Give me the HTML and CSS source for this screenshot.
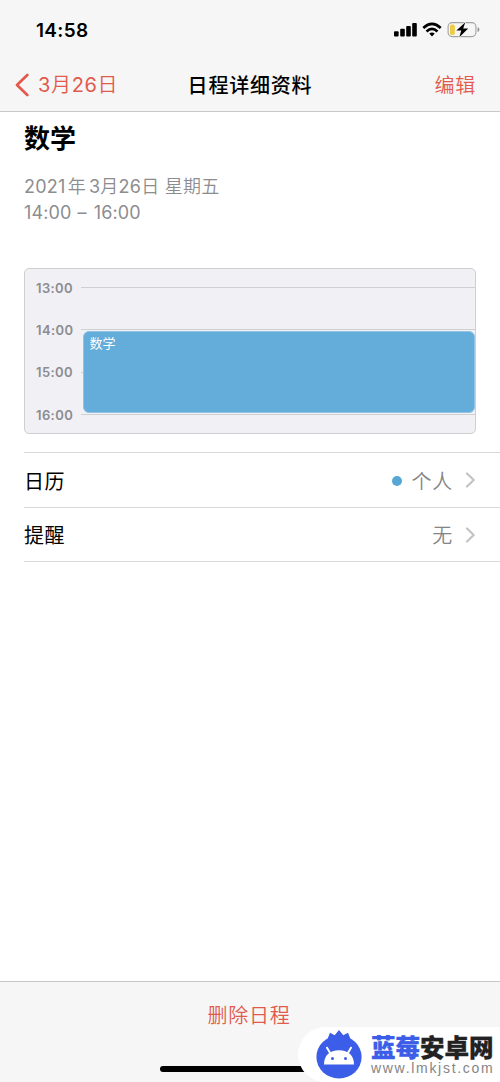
FILE: index.html
```html
<!DOCTYPE html>
<html lang="zh-CN">
<head>
<meta charset="utf-8">
<title>日程详细资料</title>
<link rel="stylesheet" href="styles.css">
</head>
<body>
<div class="screen">
  <header class="header">
    <div class="status">
      <span class="clock">14:58</span>
      <svg class="status-icons" width="88" height="20" viewBox="0 0 88 20">
        <rect x="2" y="11.2" width="4.6" height="5.3" rx="1"/>
        <rect x="8.2" y="8.8" width="4.6" height="7.7" rx="1"/>
        <rect x="14.2" y="6" width="4.6" height="10.5" rx="1"/>
        <rect x="20.2" y="3" width="4.6" height="13.5" rx="1"/>
        <g fill="none" stroke="#000" stroke-width="2.7">
          <path d="M31.3 7.9Q40 0 48.7 7.9"/>
          <path d="M34.5 11.4Q40 6.5 45.5 11.4"/>
        </g>
        <path d="M37.3 13.5Q40 11.4 42.7 13.5L40 16.4Z"/>
        <rect x="56.1" y="2.6" width="27.8" height="14" rx="4" fill="none" stroke="#a2a2a2" stroke-width="1.1"/>
        <path d="M85.6 7.3Q87.4 7.8 87.4 9.7T85.6 12.1Z" fill="#8e8e8e"/>
        <rect x="58" y="4.5" width="4.8" height="10.4" rx="1.7" fill="#efcc45"/>
        <path d="M73.3 2.3L64.4 10.5H69.3L67.3 17.2L76.2 8.5H71.2Z" stroke="#f6f6f6" stroke-width="1.4" paint-order="stroke"/>
      </svg>
    </div>
    <nav class="nav">
      <a class="back">
        <svg width="14" height="24" viewBox="0 0 14 24"><path d="M12.3 2L2 12L12.3 22" fill="none" stroke="currentColor" stroke-width="2.7" stroke-linecap="round" stroke-linejoin="round"/></svg>
        <span><span class="num">3</span>月<span class="num">26</span>日</span>
      </a>
      <h1 class="nav-title">日程详细资料</h1>
      <a class="edit">编辑</a>
    </nav>
  </header>
  <main class="main">
    <h2 class="event-title">数学</h2>
    <p class="event-date"><span class="num">2021</span><span class="year">年</span><span class="num">3</span>月<span class="num">26</span>日 星期五</p>
    <p class="event-time">14:00 <span class="dash">–</span> 16:00</p>
    <section class="timeline">
      <div class="hour"><span>13:00</span><i></i></div>
      <div class="hour"><span>14:00</span><i></i></div>
      <div class="hour"><span>15:00</span><i></i></div>
      <div class="hour"><span>16:00</span><i></i></div>
      <div class="event">数学</div>
    </section>
    <section class="rows">
      <div class="row">
        <span class="label">日历</span><span class="dot"></span><span class="value">个人</span>
        <svg class="chevron" width="11" height="16" viewBox="0 0 11 16"><path d="M2 1.5L8.7 8L2 14.5"/></svg>
      </div>
      <div class="row">
        <span class="label">提醒</span><span class="value">无</span>
        <svg class="chevron" width="11" height="16" viewBox="0 0 11 16"><path d="M2 1.5L8.7 8L2 14.5"/></svg>
      </div>
    </section>
  </main>
  <footer class="footer">
    <a class="delete">删除日程</a>
    <div class="home-bar"></div>
  </footer>
  <aside class="watermark">
    <svg class="logo" width="46" height="50" viewBox="0 0 46 50">
      <path d="M9.5 14L14 2.8L18.7 5.2L23 0L27.3 5.2L32 2.8L36.5 14Z" fill="#3b5de7"/>
      <ellipse cx="23" cy="27" rx="22.6" ry="21.5" fill="#3b5de7"/>
      <path d="M8 34.5C8 25.5 13.5 20.2 23 20.2S38 25.5 38 34.5Z" fill="#fff"/>
      <path d="M11 17.7L15 24.5M35 17.7L31 24.5" stroke="#fff" stroke-width="2" stroke-linecap="round"/>
      <circle cx="16.5" cy="28.4" r="1.5" fill="#3b5de7"/><circle cx="29.5" cy="28.4" r="1.5" fill="#3b5de7"/>
    </svg>
    <div class="brand">
      <div class="brand-name"><b>蓝莓</b>安卓网</div>
      <div class="brand-url">www.lmkjst.com</div>
    </div>
  </aside>
</div>
</body>
</html>
```
FILE: styles.css
```css
* { box-sizing: border-box; }
body, h1, h2, p { margin: 0; }
body {
  font-family: Inter, "Noto Sans CJK SC", sans-serif;
  background: #fff;
  color: #000;
}
.screen {
  position: relative;
  display: flex;
  flex-direction: column;
  height: 1082px;
  overflow: hidden;
}
.header {
  height: 112px;
  background: #f6f6f6;
  border-bottom: 1px solid #c8c8ca;
}
.status {
  display: flex;
  justify-content: space-between;
  align-items: center;
  height: 60px;
  padding: 0 20px 0 36px;
}
.clock { font-size: 19px; font-weight: 600; letter-spacing: 0.3px; }
.num { font-weight: 400; }
.nav {
  display: grid;
  grid-template-columns: 1fr auto 1fr;
  align-items: center;
  height: 50px;
  padding: 0 24px 0 15px;
  color: #e15a4c;
  font-size: 20px;
  font-weight: 350;
  line-height: 28px;
}
.back { display: flex; align-items: center; gap: 9px; letter-spacing: 0.65px; }
.nav-title {
  padding: 2px 0 0 9px;
  color: #000;
  font-size: 20px;
  font-weight: 500;
  letter-spacing: 0.8px;
}
.edit { justify-self: end; padding-top: 2px; letter-spacing: 0.8px; }
.main { flex: 1; padding: 7px 0 0 24px; }
.event-title { font-size: 26px; line-height: 40px; font-weight: 700; }
.event-date, .event-time {
  color: #8d8d8f;
  font-size: 18px;
  font-weight: 350;
  line-height: 26px;
  letter-spacing: 0.25px;
}
.event-date { margin-top: 15px; }
.event-time { font-weight: 400; letter-spacing: 0.1px; }
.dash { margin: 0 2px 0 1px; }
.year { margin: 0 3px 0 2px; }
.timeline {
  position: relative;
  height: 166px;
  margin: 42px 24px 0 0;
  padding: 0 0 0 11px;
  background: #f0f0f5;
  border: 1px solid #cfcfd2;
  border-radius: 5px;
}
.hour {
  display: flex;
  align-items: center;
  gap: 8px;
  height: 42.3px;
  color: #8c8c91;
  font-size: 13px;
  font-weight: 600;
  letter-spacing: 0.4px;
}
.hour:first-child { margin-top: -2.5px; }
.hour span { width: 37px; }
.hour i { flex: 1; height: 1px; background: #d0d0d4; }
.event {
  position: absolute;
  left: 58px;
  right: 0;
  top: 62px;
  height: 82px;
  padding: 2px 5.5px;
  border-radius: 6px;
  border: 1px solid #8fc4e3;
  background: #64acd9;
  color: #fff;
  font-size: 13px;
  line-height: 19px;
}
.rows { margin-top: 18px; border-top: 1px solid #d7d7d9; }
.row {
  display: flex;
  align-items: center;
  height: 54.5px;
  padding: 1px 24px 0 0;
  border-bottom: 1px solid #d9d9db;
  font-size: 20px;
  line-height: 28px;
}
.label { margin-right: auto; padding-top: 3px; letter-spacing: 0.4px; }
.dot { width: 10px; height: 10px; margin: 1px 9px 0 0; border-radius: 50%; background: #56a7d3; }
.value { padding-top: 3px; color: #858588; font-weight: 350; letter-spacing: 0.8px; }
.chevron {
  margin-left: 12px;
  fill: none;
  stroke: #c3c3c6;
  stroke-width: 2.2;
  stroke-linecap: round;
  stroke-linejoin: round;
}
.footer {
  display: flex;
  flex-direction: column;
  align-items: center;
  height: 101px;
  padding: 20px 2px 0 0;
  background: #f6f6f6;
  border-top: 1px solid #c8c8ca;
}
.delete { color: #e15a4c; font-size: 20px; font-weight: 350; line-height: 28px; letter-spacing: 0.8px; }
.home-bar { width: 179px; height: 6px; margin-top: 36px; border-radius: 3px; background: #000; }
.watermark {
  position: absolute;
  left: 298px;
  right: 0;
  bottom: 0;
  display: flex;
  gap: 9px;
  height: 55px;
  padding: 3px 0 0 18px;
  border-radius: 28px 0 0 28px;
  background: #fff;
}
.logo { flex: none; }
.brand { padding-top: 5px; white-space: nowrap; }
.brand-name { color: #222; font-size: 24.5px; line-height: 26px; font-weight: 900; -webkit-text-stroke: 0.3px; }
.brand-name b { color: #3b5de7; font-weight: 900; }
.brand-url {
  color: #858585;
  font-family: "Liberation Sans", sans-serif;
  font-size: 14px;
  line-height: 14px;
  letter-spacing: 1.7px;
}
```
